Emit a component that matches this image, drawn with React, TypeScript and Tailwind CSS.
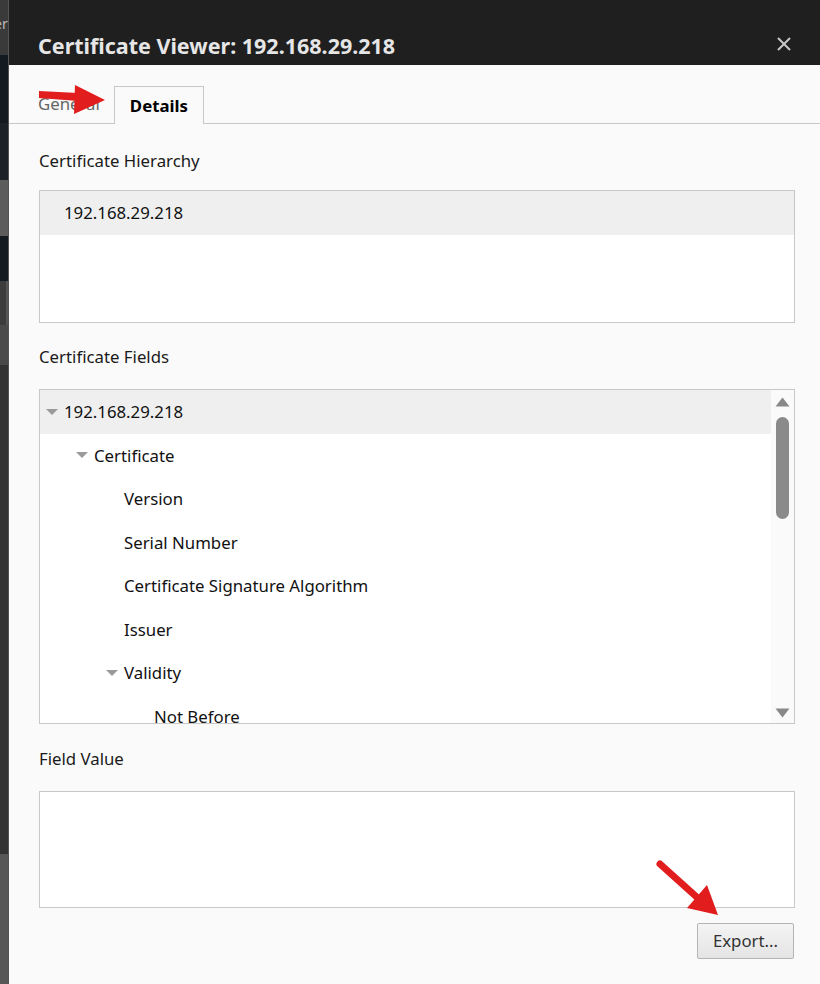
import React from 'react';

const font = { fontFamily: '"Noto Sans", "Open Sans", Arial, sans-serif' };

type Field = { label: string; level: number; open?: boolean };

const fields: Field[] = [
  { label: '192.168.29.218', level: 0, open: true },
  { label: 'Certificate', level: 1, open: true },
  { label: 'Version', level: 2 },
  { label: 'Serial Number', level: 2 },
  { label: 'Certificate Signature Algorithm', level: 2 },
  { label: 'Issuer', level: 2 },
  { label: 'Validity', level: 2, open: true },
  { label: 'Not Before', level: 3 },
];

const Caret = () => (
  <svg width="12" height="8" viewBox="0 0 12 8" className="shrink-0">
    <path d="M0 1 L12 1 L6 7 Z" fill="#9a9a9a" />
  </svg>
);

const BackgroundStrip = () => (
  <div className="w-[9px] h-full flex flex-col shrink-0 border-r border-[#555]">
    <div className="h-[55px] bg-[#3a3a3a] overflow-hidden text-[#bbb] text-sm pt-[14px] -ml-[6px]" style={font}>er</div>
    <div className="h-[68px] bg-[#131a20]" />
    <div className="h-[57px] bg-[#1c2127]" />
    <div className="h-[56px] bg-[#5c5c5c]" />
    <div className="h-[45px] bg-[#131a20]" />
    <div className="h-[44px] bg-[#3c3c3c] border-r-2 border-[#555]" />
    <div className="h-[40px] bg-[#4a4a4a]" />
    <div className="flex-1 bg-[#333] rounded-br-[3px]" />
    <div className="h-[130px] bg-[#575757]" />
  </div>
);

const App = () => {
  return (
    <div className="w-[820px] h-[984px] flex bg-[#333] overflow-hidden relative" style={font}>
      <BackgroundStrip />

      <div className="flex-1 flex flex-col bg-[#fafafa]">
        {/* Title bar */}
        <div className="h-[65px] bg-[#1f1f1f] flex items-center justify-between pl-[29px] pr-[28px] pt-[32px] pb-[6px]">
          <h1 className="text-[21.5px] font-bold text-[#e6e6e6] leading-none">Certificate Viewer: 192.168.29.218</h1>
          <svg width="16" height="16" viewBox="0 0 16 16" className="-mt-[4px]">
            <path d="M2 2 L14 14 M14 2 L2 14" stroke="#c8c8c8" strokeWidth="2" />
          </svg>
        </div>

        {/* Tabs */}
        <div className="h-[59px] flex items-end border-b border-[#c8c8c8] pl-[29px]">
          <div className="h-[38px] flex items-center pr-[14px] text-[16.8px] text-[#666]">General</div>
          <div className="h-[38px] -mb-px px-[15px] flex items-center bg-[#fafafa] border border-b-0 border-[#c8c8c8] text-[16.8px] font-bold text-black">
            Details
          </div>
        </div>

        <div className="flex flex-col px-[30px] pt-[23px] pr-[25px]">
          <div className="text-[16.8px] text-[#1a1a1a] h-[28px] leading-[28px]">Certificate Hierarchy</div>
          <div className="mt-[15px] h-[133px] bg-white border border-[#c8c8c8]">
            <div className="h-[44px] bg-[#efefef] flex items-center pl-[24px] text-[16.8px] text-[#111]">192.168.29.218</div>
          </div>

          <div className="mt-[20px] text-[16.8px] text-[#1a1a1a] h-[28px] leading-[28px]">Certificate Fields</div>
          <div className="mt-[18px] h-[335px] bg-white border border-[#c8c8c8] flex overflow-hidden">
            <div className="flex-1 flex flex-col overflow-hidden">
              {fields.map((f, i) => (
                <div
                  key={i}
                  className={`h-[43.5px] shrink-0 flex items-center text-[16.8px] text-[#111] ${i === 0 ? 'bg-[#efefef]' : ''}`}
                >
                  <div className="flex items-center" style={{ paddingLeft: 6 + f.level * 30 }}>
                    <div className="w-[18px] flex items-center">{f.open && <Caret />}</div>
                    <span>{f.label}</span>
                  </div>
                </div>
              ))}
            </div>
            <div className="w-[23px] bg-[#fafafa] flex flex-col items-center pt-[7px] pb-[5px]">
              <svg width="15" height="10" viewBox="0 0 15 10">
                <path d="M7.5 0.5 L14.5 9.5 L0.5 9.5 Z" fill="#888" />
              </svg>
              <div className="mt-[10px] w-[13px] h-[102px] rounded-full bg-[#8a8a8a]" />
              <div className="flex-1" />
              <svg width="15" height="10" viewBox="0 0 15 10">
                <path d="M0.5 0.5 L14.5 0.5 L7.5 9.5 Z" fill="#888" />
              </svg>
            </div>
          </div>

          <div className="mt-[21px] text-[16.8px] text-[#1a1a1a] h-[28px] leading-[28px]">Field Value</div>
          <div className="mt-[18px] h-[117px] bg-white border border-[#c8c8c8]" />

          <div className="mt-[15px] flex justify-end pr-px">
            <button className="w-[97px] h-[36px] rounded-[2px] border border-[#b4b4b4] bg-gradient-to-b from-[#f4f4f4] to-[#e4e4e4] text-[16.8px] text-[#333]">
              Export...
            </button>
          </div>
        </div>
      </div>

      {/* Annotation arrows */}
      <svg className="absolute left-0 top-0 pointer-events-none" width="820" height="984">
        <polygon points="39,91 78,93 78,101 39,98" fill="#e21d1d" />
        <polygon points="75,85 105,100 74,114" fill="#e21d1d" />
        <line x1="660" y1="864" x2="700" y2="900" stroke="#e21d1d" strokeWidth="7" strokeLinecap="round" />
        <polygon points="707,885 718,915 687,908" fill="#e21d1d" />
      </svg>
    </div>
  );
};

export default App;
